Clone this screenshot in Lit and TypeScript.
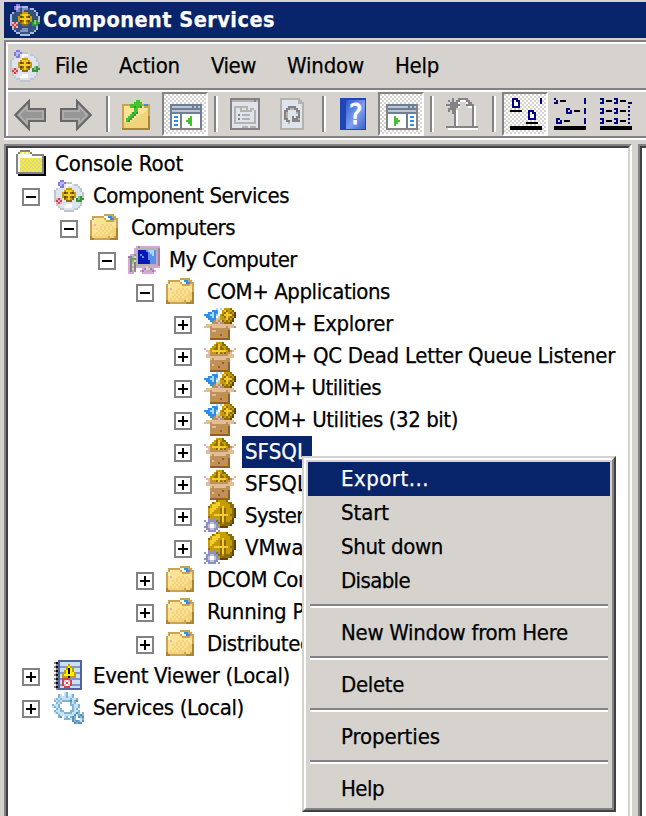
import { LitElement, html, svg, css } from "lit";
import { customElement, property } from "lit/decorators.js";

const palette: Record<string, string> = {
  k: "#000000", K: "#424142", x: "#848284", l: "#b5b2ad", s: "#d6d3ce", w: "#ffffff",
  n: "#000084", y: "#f5cc28", Y: "#c39c08", o: "#8f6c06", O: "#5e4600",
  t: "#dfbf96", T: "#c09058", U: "#94602a",
  a: "#2d8fe8", A: "#a8d8fc", g: "#2f9a35", G: "#7cc87a", e: "#43c32e",
  r: "#d04450", R: "#eeb0b0", p: "#b9b9f0", P: "#7d7de0",
  q: "#dfe4ec", Q: "#bdc5d2",
  c: "#fbe294", C: "#f3d27c", d: "#cba451", D: "#a98336", f: "#fff0b8",
  m: "#d8a6d8", M: "#a87cae", i: "#c4e2f4", I: "#7fb4d4", j: "#5a8db4",
  z: "#0418b4", Z: "#5b90f2", h: "#6c7f94", H: "#4f63a4", v: "#8d8fc8",
};

const titlePalette: Record<string, string> = { ...palette, q: "#34527f", Q: "#a9bbd6", w: "#7d95bb" };

const bitmaps: Record<string, string[]> = {
  com: [
    "....PP..........",
    "...PppPQQQ......",
    "...PpPqwwwqQQ...",
    "....PPqwqqqqqQ..",
    "..QqqqqYYYqqqqQ.",
    ".QqqqqYyyyYqqqQ.",
    ".QqqqYOoyoOYqqqQ",
    ".QqqqYyyyyyYqqqQ",
    ".QqqqYOoyoOYqGgQ",
    ".QRrRqoYyYoqgGgg",
    ".QrRrqqoooqqggg.",
    "..RrRqqqqqqqqqQ.",
    "..QqqqqwwwqqqqQ.",
    "...QqqwwwwqqqQ..",
    "....QQqqqqqQQ...",
    "......QQQQQ.....",
  ],
  folder: [
    "................",
    ".......ddddd....",
    ".ddddddwwaadd...",
    ".dfccccdwwaadd..",
    "dfccccccddddCd..",
    "dfcccccccccccd..",
    "dcRcccCcCcCccd..",
    "dccccCcCcCcCcd..",
    "dccCcCcCcCcCCD..",
    "dcccCcCcCcCCCD..",
    "dccCcCcCcCCCCD..",
    "dcCcCcCCCCcCCD..",
    "DCCCCCCCCdCCdD..",
    "DDddddddddDDDD..",
    "................",
    "................",
  ],
  root: [
    "................",
    "...xxxxx........",
    "..xYwYwYx.......",
    ".xwwwwwwwxxxxxx.",
    ".xwwwwwwwwwwwwxk",
    ".xwBbBbBbBbBbBxk",
    ".xwbBbBbBbBbBbxk",
    ".xwBbBbBbBbBbBxk",
    ".xwbBbBbBbBbBbxk",
    ".xwBbBbBbBbBbBxk",
    ".xwbBbBbBbBbBbxk",
    ".xwBbBbBbBbBbBxk",
    ".xxxxxxxxxxxxxxk",
    "..kkkkkkkkkkkkkk",
    "................",
    "................",
  ].map((row) => row.replace(/Y/g, "B")),
  computer: [
    "................",
    "....mMmmmmmmmmmm",
    "...mlllllllllllM",
    "...mlzzzzZAAAZlM",
    "...mlzzzzzZAAZlM",
    ".mmMlzZzzzZZAZlM",
    "MxlslzzZzzZZZZlM",
    "mxexlzzzzzZZZZlM",
    "mxGslzzzzzzZZZlM",
    "mxlxlzzzzzzZZZlM",
    "mxsxlllllllllllM",
    "mxlxmmmmmslmmmmm",
    "mxsx...mMssMm...",
    "mxlM..mMmlllMm..",
    "mmm....mmmmmm...",
    "................",
  ],
  events: [
    "...HHHHHHHHHHHH.",
    ".xkHiiiiiiiiiiH.",
    "..xHiiiiYiiiiiH.",
    ".xkHvvvYBYvvvvH.",
    "..xHiiiYkBYiiiH.",
    ".xkHiiYBkBYiiiH.",
    "..xHvvYBkBBYvvH.",
    ".xkHiYBBBBBYiiH.",
    "..xHiYYYkYYYiiH.",
    ".xkHvrrrrvvvvvH.",
    "..xHirRwRriiiiH.",
    ".xkHirwrwriiiiH.",
    "..xHvrRwRrvvvvH.",
    ".xkHiirrriiiiiH.",
    "..xHHHHHHHHHHHH.",
    "................",
  ],
  services: [
    "......iI........",
    "...Ii.iI.iI.....",
    "...IiiiIiiI.....",
    ".iIiIiiiiIiiI...",
    ".IiIiIIIIjiIj...",
    "..IiIw..wIiI....",
    "IiiIw....IIiiI..",
    "iIiI.....wIiiI..",
    "..IiIw....IiI...",
    ".IiiIIw..IIiiI..",
    ".iIiiiIIIIiijI.I",
    "...IiiiiiiijiIjI",
    "...Ij.iI.IjIwjIj",
    "......IIIijI.wiI",
    "..........jIjIij",
    "...........jIjj.",
  ],
  shared: [
    "......AwA.YYYo..",
    "....aaawwYyoYYo.",
    "..aaAaawwYoyYoYO",
    "aaaAAaAwYoyyyyoO",
    ".aaaAawAYYoyYoYO",
    "..aaaattYYYyoYO.",
    "...aaTtTtoYoYoO.",
    "....TTTtTToooO..",
    ".tttttttttttttt.",
    "tttTtttttttTtttT",
    "...TTTTTTTTTT...",
    "...TttTTTTTTU...",
    "...TTTTTTTYTU...",
    "...TTTTTUTTTU...",
    "...TTTYTTTTTU...",
    "...UUUUUUUUUU...",
  ],
  box: [
    "................",
    "......YYYo......",
    ".....YoyYoo.....",
    "....YYoyoYYo....",
    "R..YYooyooYoo..R",
    ".RtYyyyyyyyYoTR.",
    "..tTYYoyoYoTTt..",
    ".ttTTTTTTTTTttt.",
    ".tttttttttttttt.",
    "...tTttttttTT...",
    "...TTTTTTTTTT...",
    "...TTTTTTUTTU...",
    "...TtTTTTTTTU...",
    "...TTTTUTTTTU...",
    "...TTTTTTTYTU...",
    "...UUUUUUUUUU...",
  ],
  library: [
    "......oYYYYo....",
    "....oYyyYYYYoo..",
    "...YyyyyYYYYYoo.",
    "..oYyyyYYyYYYoo.",
    "..YyyyYYoyoYYYoO",
    "..YyyYYYoyoYYYoO",
    "..YyYYYYoyoYYYoO",
    "..YYYyyyyyyyYooO",
    "..oYYYYYoyoYYYoO",
    "..vYYvYYoyoYYYO.",
    "v.vvvvovoyoYYoO.",
    ".vvQQvvooYooooO.",
    ".vQwwQvYoooooO..",
    "vvQwwQvvOOOO....",
    ".vvQQvv.........",
    "v.vvvv.v........",
  ],
  up: [
    "................",
    ".......ee.......",
    "......eeee......",
    "ddddeeeeeedaad..",
    "dccceegeegcddd..",
    "dccccceecccccd..",
    "dccccceeccccCd..",
    "dccccgegcccCCd..",
    "dccceegccCCCCd..",
    "dcceegcCCCCCCD..",
    "dceegcCCCCCCCD..",
    "dcegcCCCCCCCCD..",
    "dCCCCCCCCCCCCD..",
    "dCCCCCCCCCCCCD..",
    "dCCCCCCCCCCCCD..",
    "DDDDDDDDDDDDDD..",
  ],
  showTree: [
    "................",
    "................",
    "................",
    "hhhhhhhhhhhhhhhh",
    "hQQQQQQQQQQhQhQh",
    "hhhhhhhhhhhhhhhh",
    "hQQQQQQQQQQQQQQh",
    "hhhhhhhhhhhhhhhh",
    "hwwwwhwwwwwwwwwh",
    "hwaawhwwwwewwwwh",
    "hwwwwhwwweewwwwh",
    "hwaawhwweeewwwwh",
    "hwwwwhwwweewwwwh",
    "hwaawhwwwwewwwwh",
    "hwwwwhwwwwwwwwwh",
    "xxxxxxxxxxxxxxxx",
  ],
  showActions: [
    "................",
    "................",
    "................",
    "xhhhhhhhhhhhhhhx",
    "xQQQQQQQQQQhQhQx",
    "xhhhhhhhhhhhhhhx",
    "xQQQQQQQQQQQQQQx",
    "xhhhhhhhhhhhhhhx",
    "xwwwwwwwwwhwwwwx",
    "xwwwewwwwwhwaawx",
    "xwwweewwwwhwwwwx",
    "xwwweeewwwhwaawx",
    "xwwweewwwwhwwwwx",
    "xwwwewwwwwhwaawx",
    "xwwwwwwwwwhwwwwx",
    "xxxxxxxxxxxxxxxx",
  ],
  props: [
    "xxxxxxxxxxxxxxx.",
    "xlllllllllllxlx.",
    "xqqqqqqqqqqqqqx.",
    "xqqqqqqqqqqqqqx.",
    "xqlllllllqqqqqx.",
    "xqlqqlqqlqllqqx.",
    "xqlqqllllllqlqx.",
    "xqlqqqqqqqqqlqx.",
    "xqlqxqllllqqlqx.",
    "xqlqqqqqqqqqlqx.",
    "xqlqxqllllqqlqx.",
    "xqlqqqqqqqqqlqx.",
    "xqlllllllllllqx.",
    "xqqqqqqqqqqqqqx.",
    "xqqqqqlllqlllqx.",
    "xxxxxxxxxxxxxxx.",
  ],
  refresh: [
    "..llllllllll....",
    "..lqqqqqqqqll...",
    "..lqqqqqqqqlll..",
    "..lqqqqqqqqqql..",
    "..lqqqxxxxqqql..",
    "..lqqxxllxxqql..",
    "..lqxxqqqqxxql..",
    "..lqxlqqqqlxql..",
    "..lqxlqqqqqxql..",
    "..lqxlqqxqxxql..",
    "..lqxxqqxxxlql..",
    "..lqqxxqxxxxql..",
    "..lqqqlqqqqqql..",
    "..lqqqqqqqqqql..",
    "..lqqqqqqqqqql..",
    "..llllllllllll..",
  ],
  newWindow: [
    "...x..xxxxx.....",
    ".x.x.xxwwwxx....",
    "..xxxxwssswxx...",
    "xxxxxxxsssxxxx..",
    "..xxxxwsssswwxw.",
    ".xxxx.sssssssxw.",
    ".x.xxwsssssssxw.",
    "...xxwsssssssxw.",
    "....xwsssssssxw.",
    "....xwsssssssxw.",
    "....xwsssssssxw.",
    "....xwsssssssxw.",
    "....xwsssssssxw.",
    "....xwsssssssxw.",
    "xxxxxxxxxxxxxxxx",
    ".wwwwwwwwwwwwwww",
  ],
  viewA: [
    ".nnn...........n",
    ".nwnn..........n",
    ".nwwn..........n",
    ".nwwn...........",
    ".nnnn...........",
    "................",
    "kkkkkk...nnn....",
    ".........nwnn...",
    ".........nwwn...",
    ".........nwwn...",
    ".........nnnn...",
    "................",
    "........kkkkkk..",
    "................",
    "kkkkkkkkkkkkkkkk",
    "kkkkkkkkkkkkkkkk",
  ],
  viewB: [
    "n..............n",
    ".n.kkk.........n",
    "nn.............n",
    "................",
    "................",
    "......nn.......n",
    "......n.n.kkk..n",
    "......nnn......n",
    "................",
    "................",
    ".nn............n",
    ".n.n.kkk.......n",
    ".nnn...........n",
    "................",
    "kkkkkkkkkkkkkkkk",
    "kkkkkkkkkkkkkkkk",
  ],
  viewC: [
    "nn.....nn.......",
    ".n.kkk..n.kkk...",
    "nn.....nn.....nn",
    "................",
    "..............n.",
    "nn.....nn.......",
    ".n.kkk..n.kkk.n.",
    "nn.....nn.......",
    "..............n.",
    "................",
    "nn.....nn.....n.",
    ".n.kkk..n.kkk...",
    "nn.....nn.....n.",
    "................",
    "kkkkkkkkkkkkkkkk",
    "kkkkkkkkkkkkkkkk",
  ],
};
palette.B = "#fff200";
palette.b = "#d2d0c0";

const vectors: Record<string, unknown> = {
  back: svg`<path d="M.6 8.500L7.500 1.500V5.500H15.500V11.500H7.500V15.500Z" fill="#969696" stroke="#686868"/><path d="M2.500 8.500L6.500 4.300V6.500H14.500V10.500H6.500V12.700Z" fill="none" stroke="#b4b4b4" stroke-width=".7"/>`,
  forward: svg`<path d="M15.400 8.500L8.500 1.500V5.500H.5V11.500H8.500V15.500Z" fill="#969696" stroke="#686868"/><path d="M13.500 8.500L9.500 4.300V6.500H1.500V10.500H9.500V12.700Z" fill="none" stroke="#b4b4b4" stroke-width=".7"/>`,
  help: svg`<defs><linearGradient id="hb" x1="0" y1="0" x2="1" y2="1"><stop offset="0" stop-color="#2b59d0"/><stop offset=".55" stop-color="#7f9ff0"/><stop offset="1" stop-color="#3862cc"/></linearGradient></defs><rect x="1" width="13" height="16" fill="#1e46b4"/><rect x="4" y="1" width="9.500" height="14.500" fill="url(#hb)"/><text x="8.900" y="13.200" text-anchor="middle" font-family="DejaVu Sans Condensed, sans-serif" font-size="14" fill="#fff" stroke="#fff" stroke-width=".4">?</text>`,
};

@customElement("pixel-icon")
class PixelIcon extends LitElement {
  @property() name = "";
  @property({ type: Boolean }) dark = false;
  static styles = css`
    :host { display: block; width: 32px; height: 32px; flex: none; }
    svg { display: block; width: 32px; height: 32px; overflow: visible; }
  `;
  private paths() {
    const colors = this.dark ? titlePalette : palette;
    const byColor = new Map<string, string>();
    (bitmaps[this.name] ?? []).forEach((row, y) => {
      for (let x = 0; x < row.length; ) {
        const ch = row[x];
        let end = x + 1;
        while (end < row.length && row[end] === ch) end++;
        if (ch !== ".") byColor.set(ch, (byColor.get(ch) ?? "") + `M${x} ${y}h${end - x}v1h${x - end}z`);
        x = end;
      }
    });
    return [...byColor].map(([ch, d]) => svg`<path shape-rendering="crispEdges" fill=${colors[ch]} d=${d}></path>`);
  }
  render() {
    return html`<svg viewBox="0 0 16 16">${vectors[this.name] ?? this.paths()}</svg>`;
  }
}

/* Text whose letter spacing is tuned so that it spans the given width. */
@customElement("fit-label")
class FitLabel extends LitElement {
  @property() text = "";
  @property({ type: Number }) span = 0;
  static styles = css`
    :host { display: block; white-space: pre; padding-left: 1px; -webkit-text-stroke: 0.25px currentColor; }
    .text { display: inline-block; }
  `;
  updated() {
    const el = this.renderRoot.querySelector<HTMLElement>(".text");
    if (!el || !this.span) return;
    el.style.letterSpacing = "0px";
    const natural = el.getBoundingClientRect().width;
    el.style.letterSpacing = `${(this.span + 1 - natural) / this.text.length}px`;
  }
  render() {
    return html`<span class="text">${this.text}</span>`;
  }
}

type Node = [level: number, icon: string, text: string, width: number, toggle: string];
const tree: Node[] = [
  [0, "root", "Console Root", 127, ""],
  [1, "com", "Component Services", 195, "-"],
  [2, "folder", "Computers", 103, "-"],
  [3, "computer", "My Computer", 127, "-"],
  [4, "folder", "COM+ Applications", 182, "-"],
  [5, "shared", "COM+ Explorer", 147, "+"],
  [5, "box", "COM+ QC Dead Letter Queue Listener", 369, "+"],
  [5, "shared", "COM+ Utilities", 135, "+"],
  [5, "shared", "COM+ Utilities (32 bit)", 212, "+"],
  [5, "box", "SFSQL", 62, "+"],
  [5, "box", "SFSQL", 62, "+"],
  [5, "library", "System", 69, "+"],
  [5, "library", "VMware", 77, "+"],
  [4, "folder", "DCOM Config", 126, "+"],
  [4, "folder", "Running Processes", 180, "+"],
  [4, "folder", "Distributed", 104, "+"],
  [1, "events", "Event Viewer (Local)", 196, "+"],
  [1, "services", "Services (Local)", 150, "+"],
];
const selectedRow = 9;

const menus: [string, number, number][] = [
  ["File", 32, 32], ["Action", 60, 32], ["View", 44, 32], ["Window", 76, 32], ["Help", 43, 0],
];

const toolbar: [string, boolean][][] = [
  [["back", false], ["forward", false]],
  [["up", false], ["showTree", true]],
  [["props", false], ["refresh", false]],
  [["help", false], ["showActions", true]],
  [["newWindow", false]],
  [["viewA", true], ["viewB", false], ["viewC", false]],
];

const contextMenu: [string, number][][] = [
  [["Export...", 87], ["Start", 47], ["Shut down", 101], ["Disable", 68]],
  [["New Window from Here", 226]],
  [["Delete", 62]],
  [["Properties", 98]],
  [["Help", 42]],
];

@customElement("app-root")
class AppRoot extends LitElement {
  static styles = css`
    :host {
      display: block; position: relative; width: 646px; height: 816px; overflow: hidden;
      box-sizing: border-box; padding: 2px 0 0 4px; background: #d6d3ce; color: #000;
      font: 22px/32px "DejaVu Sans Condensed", "DejaVu Sans", sans-serif;
      font-stretch: condensed;
    }
    .title { display: flex; align-items: center; height: 36px; padding-left: 4px; background: #08246b; color: #fff; }
    .title fit-label { margin-left: 2px; font-weight: bold; font-size: 21.500px; }
    .bars { margin-top: 2px; border: solid #848284; border-width: 2px 0 2px 2px; }
    .inner { border: solid #fff; border-width: 2px 0 0 2px; }
    .menubar { display: flex; align-items: center; height: 44px; }
    .menubar pixel-icon { margin-right: 14px; }
    .menu { display: flex; }
    .groove { height: 2px; background: #848284; border-bottom: 2px solid #fff; }
    .toolbar { display: flex; height: 44px; }
    .group { display: flex; }
    .group + .group::before { content: ""; width: 2px; height: 36px; margin: 4px 6px 0; background: #848284; border-right: 2px solid #fff; }
    .tool { box-sizing: border-box; width: 46px; height: 44px; padding: 6px 0 0 6px; }
    .pressed {
      padding: 4px 0 0 6px; border: 2px solid; border-color: #848284 #fff #fff #848284;
      background: repeating-conic-gradient(#fff 0 25%, #d6d3ce 0 50%) 0 0 / 4px 4px;
    }
    .edge { height: 2px; background: #fff; }
    .panes { display: flex; height: 676px; margin-top: 4px; }
    .pane { box-sizing: border-box; background: #fff; border: solid #848284; border-width: 2px 0 0 2px; overflow: hidden; }
    .well { height: 100%; border: solid #424142; border-width: 2px 0 0 2px; }
    .left { width: 628px; border-right: 2px solid #fff; }
    .left .well { border-right: 2px solid #d6d3ce; }
    .splitter { width: 6px; }
    .right { flex: 1; }
    .row { display: flex; align-items: center; height: 32px; }
    .indent { flex: none; }
    .toggle { position: relative; box-sizing: border-box; flex: none; width: 18px; height: 18px; margin: 2px 12px 0 0; border: 2px solid #848284; }
    .toggle.hidden { visibility: hidden; }
    .dash, .bar { display: block; position: absolute; background: #000; }
    .dash { left: 2px; top: 6px; width: 10px; height: 2px; }
    .bar { left: 6px; top: 2px; width: 2px; height: 10px; }
    .caption { height: 32px; padding: 0 4px 0 2px; margin-left: 6px; }
    .selected { background: #08246b; color: #fff; }
    .popup {
      position: absolute; left: 302px; top: 456px; box-sizing: border-box; width: 314px; height: 356px;
      border: 2px solid; border-color: #d6d3ce #424142 #424142 #d6d3ce; background: #d6d3ce;
    }
    .face { box-sizing: border-box; height: 100%; border: 2px solid; border-color: #fff #848284 #848284 #fff; padding: 2px; }
    .item { height: 34px; padding-left: 32px; line-height: 33px; }
    .hot { background: #08246b; color: #fff; }
    .section + .section::before { content: ""; display: block; height: 2px; margin: 6px 2px 8px; background: #848284; border-bottom: 2px solid #fff; }
  `;

  private row([level, icon, text, width, toggle]: Node, index: number) {
    return html`<div class="row">
      <span class="indent" style="width:${level * 38 - 24}px; margin-left:${level ? 0 : -24}px"></span>
      <span class="toggle ${toggle ? "" : "hidden"}">
        <i class="dash"></i>${toggle === "+" ? html`<i class="bar"></i>` : ""}
      </span>
      <pixel-icon name=${icon}></pixel-icon>
      <div class="caption ${index === selectedRow ? "selected" : ""}">
        <fit-label text=${text} span=${width}></fit-label>
      </div>
    </div>`;
  }

  render() {
    return html`
      <div class="title"><pixel-icon name="com" dark></pixel-icon><fit-label text="Component Services" span="231"></fit-label></div>
      <div class="bars"><div class="inner">
        <div class="menubar">
          <pixel-icon name="com"></pixel-icon>
          ${menus.map(([text, width, gap]) => html`<div class="menu" style="width:${width + gap}px"><fit-label text=${text} span=${width}></fit-label></div>`)}
        </div>
        <div class="groove"></div>
        <div class="toolbar">
          ${toolbar.map((group) => html`<div class="group">${group.map(([name, on]) =>
            html`<div class="tool ${on ? "pressed" : ""}"><pixel-icon name=${name}></pixel-icon></div>`)}</div>`)}
        </div>
      </div></div>
      <div class="edge"></div>
      <div class="panes">
        <div class="pane left"><div class="well">${tree.map((node, i) => this.row(node, i))}</div></div>
        <div class="splitter"></div>
        <div class="pane right"><div class="well"></div></div>
      </div>
      <div class="popup"><div class="face">
        ${contextMenu.map((section, s) => html`<div class="section">${section.map(([text, width], i) =>
          html`<div class="item ${s + i === 0 ? "hot" : ""}"><fit-label text=${text} span=${width}></fit-label></div>`)}</div>`)}
      </div></div>
    `;
  }
}
